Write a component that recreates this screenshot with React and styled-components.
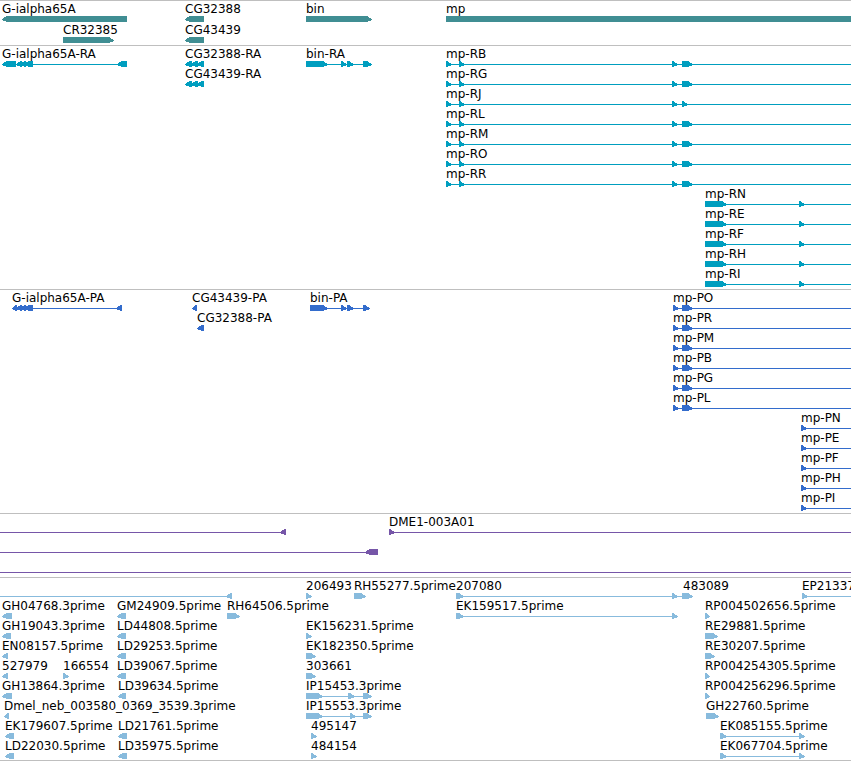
import React from 'react';
import styled, {createGlobalStyle} from 'styled-components';

const GlobalStyle = createGlobalStyle`
    body {
        margin: 0;
        background: #ffffff;
    }
`;

const Browser = styled.main`
    border-bottom: 1px solid #bfbfbf;
    color: #000000;
    font-family: "DejaVu Sans", Verdana, sans-serif;
    font-size: 12px;
    line-height: 14px;
`;

const Track = styled.section`
    display: flex;
    flex-direction: column;
    gap: ${props => props.$gap || 0}px;
    padding: 1px 0 2px;
    border-top: 1px solid #bfbfbf;
    color: ${props => props.$color};
    overflow: hidden;

    &:last-child {
        padding-bottom: 1px;
    }
`;

const Lane = styled.div`
    position: relative;
    height: 20px;
`;

// features sit at their own coordinate along the sequence
const FeatureBox = styled.div`
    position: absolute;
    top: 0;
    display: flex;
    flex-direction: column;
`;

const Label = styled.span`
    height: 14px;
    color: #000000;
    white-space: nowrap;
`;

const Glyph = styled.svg`
    display: block;
    fill: currentColor;
    overflow: visible;
    shape-rendering: crispEdges;
`;

const HEAD = 6;
const FAR = 4000; // runs past the right edge of the view

// f: name, direction, exons, options
const f = (name, dir, exons, opts = {}) => ({name, dir, exons, ...opts});
const left = (name, ...exons) => f(name, 'left', exons);
const right = (name, ...exons) => f(name, 'right', exons);
const open = (name, ...exons) => f(name, 'right', exons, {to: FAR});

const mpTranscript = (name, last = 693) => open(name, [446, 452], [459, 465], [672, 678], [682, last]);
const mpShort = name => open(name, [705, 727], [799, 805]);
const mpProtein = name => open(name, [673, 679], [682, 693]);
const mpShortProtein = name => open(name, [801, 807]);

const tracks = [
    {
        id: 'Genes',
        color: '#408e93',
        gap: 1,
        lanes: [
            [
                left('G-ialpha65A', [2, 127]),
                left('CG32388', [185, 204]),
                right('bin', [306, 372]),
                right('mp', [446, FAR])
            ],
            [
                right('CR32385', [63, 114]),
                left('CG43439', [185, 204])
            ]
        ]
    },
    {
        id: 'Transcripts',
        color: '#009ebf',
        lanes: [
            [
                left('G-ialpha65A-RA', [2, 16], [16, 22], [20, 26], [24, 33], [117, 127]),
                left('CG32388-RA', [185, 192], [191, 198], [197, 204]),
                right('bin-RA', [306, 328], [341, 347], [347, 354], [363, 372]),
                mpTranscript('mp-RB')
            ],
            [
                left('CG43439-RA', [185, 192], [191, 198], [197, 204]),
                mpTranscript('mp-RG')
            ],
            [mpTranscript('mp-RJ', 688)],
            [mpTranscript('mp-RL')],
            [mpTranscript('mp-RM')],
            [mpTranscript('mp-RO')],
            [mpTranscript('mp-RR')],
            [mpShort('mp-RN')],
            [mpShort('mp-RE')],
            [mpShort('mp-RF')],
            [mpShort('mp-RH')],
            [mpShort('mp-RI')]
        ]
    },
    {
        id: 'Proteins',
        color: '#336ccc',
        lanes: [
            [
                left('G-ialpha65A-PA', [12, 17], [16, 22], [20, 26], [24, 33], [116, 122]),
                left('CG43439-PA', [192, 197]),
                right('bin-PA', [310, 328], [341, 347], [347, 354], [363, 370]),
                mpProtein('mp-PO')
            ],
            [
                left('CG32388-PA', [197, 204]),
                mpProtein('mp-PR')
            ],
            [mpProtein('mp-PM')],
            [mpProtein('mp-PB')],
            [mpProtein('mp-PG')],
            [mpProtein('mp-PL')],
            [mpShortProtein('mp-PN')],
            [mpShortProtein('mp-PE')],
            [mpShortProtein('mp-PF')],
            [mpShortProtein('mp-PH')],
            [mpShortProtein('mp-PI')]
        ]
    },
    {
        id: 'BACs',
        color: '#7656a8',
        lanes: [
            [
                f('', 'left', [[280, 286]], {from: 0}),
                open('DME1-003A01', [389, 395])
            ],
            [f('', 'left', [[365, 378]], {from: 0})],
            [f('', 'right', [], {from: 0, to: FAR})]
        ]
    },
    {
        id: 'ESTs',
        color: '#88bbdd',
        lanes: [
            [
                f('', 'left', [[226, 232]], {from: 0}),
                right('206493', [306, 312]),
                right('RH55277.5prime', [354, 366]),
                right('207080', [456, 464], [672, 678], [682, 690]),
                right('483089', [683, 693]),
                open('EP21337', [802, 808])
            ],
            [
                left('GH04768.3prime', [2, 12]),
                left('GM24909.5prime', [117, 126]),
                right('RH64506.5prime', [227, 240]),
                right('EK159517.5prime', [456, 464], [672, 678]),
                right('RP004502656.5prime', [705, 710])
            ],
            [
                left('GH19043.3prime', [2, 11]),
                left('LD44808.5prime', [117, 126]),
                right('EK156231.5prime', [306, 312]),
                right('RE29881.5prime', [705, 718])
            ],
            [
                left('EN08157.5prime', [2, 8]),
                left('LD29253.5prime', [117, 126]),
                right('EK182350.5prime', [306, 316]),
                right('RE30207.5prime', [705, 715])
            ],
            [
                left('527979', [2, 8]),
                right('166554', [63, 69]),
                left('LD39067.5prime', [117, 126]),
                right('303661', [306, 316]),
                right('RP004254305.5prime', [705, 710])
            ],
            [
                left('GH13864.3prime', [2, 12]),
                left('LD39634.5prime', [118, 126]),
                right('IP15453.3prime', [306, 323], [348, 355], [363, 372]),
                right('RP004256296.5prime', [705, 710])
            ],
            [
                left('Dmel_neb_003580_0369_3539.3prime', [4, 9]),
                right('IP15553.3prime', [306, 323], [350, 356], [363, 372]),
                right('GH22760.5prime', [706, 719])
            ],
            [
                left('EK179607.5prime', [5, 14]),
                left('LD21761.5prime', [118, 127]),
                right('495147', [311, 317]),
                right('EK085155.5prime', [720, 727], [799, 805])
            ],
            [
                left('LD22030.5prime', [5, 14]),
                left('LD35975.5prime', [118, 127]),
                right('484154', [311, 317]),
                right('EK067704.5prime', [720, 727], [799, 805])
            ]
        ]
    }
];

// the tip of the arrow head lies on the intron line
function exonPoints(start, end, dir) {
    const head = Math.min(HEAD, end - start);
    if (dir === 'left') {
        return `${start},3 ${start + head - 1},0 ${end},0 ${end},6 ${start + head - 1},6 ${start},4`;
    }
    return `${start},0 ${end - head + 1},0 ${end},3 ${end},4 ${end - head + 1},6 ${start},6`;
}

function Feature({name, dir, exons, from, to}) {
    const start = from === undefined ? exons[0][0] : from;
    const end = to || exons[exons.length - 1][1];
    // the intron line stops short of the outer arrow tips
    const lineStart = from === undefined ? exons[0][1] - start - 1 : 0;
    const lineEnd = to ? end - start : exons[exons.length - 1][0] - start + 3;

    return <FeatureBox style={{left: start}}>
        <Label>{name}</Label>
        <Glyph width={end - start} height="6" aria-hidden="true">
            {lineEnd > lineStart && <rect x={lineStart} y="3" width={lineEnd - lineStart} height="1" />}
            {exons.map(([a, b]) => (
                <polygon key={a} points={exonPoints(a - start, b - start, dir)} />
            ))}
        </Glyph>
    </FeatureBox>
}

function App() {
    return <Browser>
        <GlobalStyle />
        {tracks.map(track => (
            <Track key={track.id} aria-label={track.id} $color={track.color} $gap={track.gap}>
                {track.lanes.map((lane, i) => (
                    <Lane key={i}>
                        {lane.map((feature, j) => <Feature key={j} {...feature} />)}
                    </Lane>
                ))}
            </Track>
        ))}
    </Browser>
}

export default App;
